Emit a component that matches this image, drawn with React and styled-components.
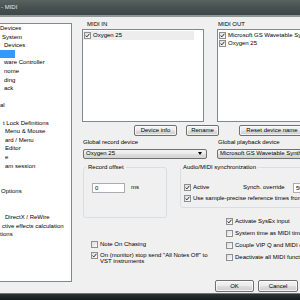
import React from "react";
import styled, { createGlobalStyle } from "styled-components";

const GlobalStyle = createGlobalStyle`
  html, body { margin: 0; padding: 0; background: #f0f0f0; }
  * { box-sizing: border-box; }
`;

const Window = styled.div`
  width: 300px;
  height: 300px;
  overflow: hidden;
  display: flex;
  flex-direction: column;
  background: #f0f0f0;
  font-family: "Liberation Sans", Arial, sans-serif;
  font-size: 6px;
  line-height: 7px;
  color: #000;
`;

const TitleBar = styled.div`
  flex: none;
  height: 17px;
  padding-left: 1px;
  background: linear-gradient(#58625f, #46504f 55%, #3d4746);
  border-bottom: 2px solid #8d9797;
  color: #e1e5e5;
  line-height: 15px;
  white-space: nowrap;
`;

const BottomBar = styled.div`
  flex: none;
  height: 7px;
  border-top: 1px solid #6f7879;
  background: linear-gradient(#2d3334, #161b1c);
`;

const Body = styled.div`
  flex: 1;
  min-height: 0;
  display: flex;
`;

const Tree = styled.ul`
  flex: none;
  width: 72px;
  margin: 6px 0 11px;
  padding: 0;
  list-style: none;
  background: #fff;
  border: 1px solid #828790;
  border-left: none;
  overflow: hidden;
`;

const TreeItem = styled.li`
  height: 8.6px;
  line-height: 8.6px;
  padding-left: ${p => p.$indent || 0}px;
  white-space: nowrap;
`;

const Selected = styled.span`
  display: inline-block;
  width: 15px;
  height: 8px;
  vertical-align: top;
  background: #3399ff;
`;

const Content = styled.div`
  flex: 1;
  min-width: 0;
  margin-left: 10px;
  padding-top: 4px;
  display: flex;
  flex-direction: column;
  white-space: nowrap;
`;

const Columns = styled.div`
  display: grid;
  grid-template-columns: 125px 130px;
  column-gap: 10px;
  margin-top: ${p => p.$top || 0}px;
`;

const Column = styled.div`
  display: flex;
  flex-direction: column;
`;

const Label = styled.div`
  height: 7px;
  padding-left: ${p => p.$indent || 0}px;
`;

const ListBox = styled.div`
  width: 122px;
  height: 93px;
  margin-top: 1px;
  padding: 1px 0 0;
  background: #fff;
  border: 1px solid #828790;
`;

const ListRow = styled.div`
  display: flex;
  align-items: center;
  gap: 2px;
  height: 8.6px;
  width: ${p => (p.$focus ? "111px" : "auto")};
  padding-left: 1px;
  background: ${p => (p.$focus ? "#ededed" : "transparent")};
`;

const Box = styled.span`
  flex: none;
  width: 7px;
  height: 7px;
  display: inline-flex;
  align-items: center;
  justify-content: center;
  border: 1px solid #8f8f8f;
  background: linear-gradient(135deg, #dcdcdc, #fbfbfb);
`;

const Check = ({ on }) => (
  <Box>
    {on && (
      <svg width="5" height="5" viewBox="0 0 5 5">
        <path d="M0.6 2.6 L1.9 3.9 L4.4 0.8" fill="none" stroke="#2e2e2e" strokeWidth="1" />
      </svg>
    )}
  </Box>
);

const ButtonRow = styled.div`
  display: flex;
  margin-top: 3px;
  padding-left: 52px;
  gap: 9px;
`;

const Button = styled.button`
  flex: none;
  width: ${p => p.$w}px;
  height: ${p => p.$h || 11}px;
  margin-left: ${p => p.$ml || 0}px;
  padding: 0;
  font: inherit;
  color: #000;
  border: 1px solid #707070;
  border-radius: 2px;
  background: linear-gradient(#f3f3f3, #ebebeb 48%, #dddddd 52%, #cfcfcf);
  box-shadow: inset 0 0 0 1px rgba(255, 255, 255, 0.7);
`;

const Combo = styled.div`
  display: flex;
  align-items: center;
  justify-content: space-between;
  width: ${p => p.$w}px;
  height: 9.5px;
  margin-top: 3px;
  margin-left: ${p => p.$ml || 0}px;
  padding: 0 4px 0 2px;
  border: 1px solid #707070;
  border-radius: 2px;
  background: linear-gradient(#f2f2f2, #ebebeb 48%, #dddddd 52%, #d4d4d4);
`;

const Arrow = styled.span`
  width: 0;
  height: 0;
  border-left: 2.5px solid transparent;
  border-right: 2.5px solid transparent;
  border-top: 3px solid #000;
`;

const Lower = styled.div`
  display: flex;
  margin-top: 5px;
  margin-left: 1px;
`;

const LeftCol = styled.div`
  flex: none;
  width: 97px;
  display: flex;
  flex-direction: column;
`;

const RightCol = styled.div`
  flex: none;
  width: 200px;
  display: flex;
  flex-direction: column;
`;

const Group = styled.fieldset`
  margin: 0;
  width: ${p => p.$w}px;
  height: ${p => p.$h}px;
  padding: 0 0 0 ${p => p.$pl || 0}px;
  border: 1px solid #d5dfe5;
  border-radius: 3px;
  legend {
    padding: 0 2px;
    height: 7px;
  }
`;

const OffsetRow = styled.div`
  display: flex;
  align-items: center;
  gap: 6px;
  margin-top: 12px;
  padding-left: 6px;
`;

const Field = styled.div`
  width: ${p => p.$w}px;
  height: 10px;
  padding-left: 2px;
  line-height: 8px;
  background: #fff;
  border: 1px solid #abadb3;
`;

const CheckRow = styled.div`
  display: flex;
  align-items: ${p => (p.$top ? "flex-start" : "center")};
  gap: 2px;
  width: ${p => (p.$w ? `${p.$w}px` : "auto")};
  white-space: ${p => (p.$wrap ? "normal" : "nowrap")};
  line-height: ${p => p.$lh || 7}px;
`;

const SyncRow = styled.div`
  display: flex;
  align-items: center;
  margin-top: ${p => p.$top || 0}px;
  padding-left: 3px;
`;

const Spread = styled.div`
  width: ${p => p.$w}px;
  flex: none;
`;

const CheckList = styled.div`
  display: flex;
  flex-direction: column;
  gap: ${p => p.$gap}px;
  margin-top: ${p => p.$top}px;
  padding-left: ${p => p.$pl}px;
`;

const Footer = styled.div`
  margin-top: auto;
  margin-bottom: 1px;
  display: flex;
  justify-content: flex-end;
  gap: 4px;
  padding-right: 2px;
`;

const treeItems = [
  ["Devices", 0], [" System", 2], ["Devices", 4], [null, 0],
  ["ware Controller", 4], ["nome", 4], ["ding", 4], ["ack", 4], ["", 0],
  ["al", 0], ["", 0], ["t Lock Definitions", 3], ["Menu & Mouse", 5],
  ["ard / Menu", 5], ["Editor", 5], ["e", 5], ["am session", 5], ["", 0],
  ["", 0], ["Options", 1], ["", 0], ["", 0], ["DirectX / ReWire", 5],
  ["ctive effects calculation", 2], ["tions", 0],
];

export default function App() {
  return (
    <Window>
      <GlobalStyle />
      <TitleBar>- MIDI</TitleBar>
      <Body>
        <Tree>
          {treeItems.map(([text, indent], i) => (
            <TreeItem key={i} $indent={indent}>
              {text === null ? <Selected /> : text}
            </TreeItem>
          ))}
        </Tree>
        <Content>
          <Columns>
            <Column>
              <Label $indent={5}>MIDI IN</Label>
              <ListBox>
                <ListRow $focus>
                  <Check on />
                  Oxygen 25
                </ListRow>
              </ListBox>
            </Column>
            <Column>
              <Label $indent={1}>MIDI OUT</Label>
              <ListBox>
                <ListRow>
                  <Check on />
                  Microsoft GS Wavetable Synth
                </ListRow>
                <ListRow>
                  <Check on />
                  Oxygen 25
                </ListRow>
              </ListBox>
            </Column>
          </Columns>
          <ButtonRow>
            <Button $w={43}>Device info</Button>
            <Button $w={33}>Rename</Button>
            <Button $w={66} $ml={11}>Reset device name</Button>
          </ButtonRow>
          <Columns $top={3}>
            <Column>
              <Label $indent={1}>Global record device</Label>
              <Combo $w={124} $ml={1}>
                Oxygen 25
                <Arrow />
              </Combo>
            </Column>
            <Column>
              <Label $indent={1}>Global playback device</Label>
              <Combo $w={124}>
                Microsoft GS Wavetable Synth
                <Arrow />
              </Combo>
            </Column>
          </Columns>
          <Lower>
            <LeftCol>
              <Group $w={84} $h={54} $pl={2}>
                <legend>Record offset</legend>
                <OffsetRow>
                  <Field $w={33}>0</Field>
                  ms
                </OffsetRow>
              </Group>
              <CheckList $gap={4} $top={23} $pl={8}>
                <CheckRow>
                  <Check />
                  Note On Chasing
                </CheckRow>
                <CheckRow $top $wrap $w={128} $lh={6.5}>
                  <Check on />
                  On (monitor) stop send "All Notes Off" to VST instruments
                </CheckRow>
              </CheckList>
            </LeftCol>
            <RightCol>
              <Group $w={160} $h={44} $pl={0}>
                <legend>Audio/MIDI synchronization</legend>
                <SyncRow $top={12}>
                  <Spread $w={59}>
                    <CheckRow>
                      <Check on />
                      Active
                    </CheckRow>
                  </Spread>
                  <Spread $w={50}>Synch. override</Spread>
                  <Field $w={30}>50</Field>
                </SyncRow>
                <SyncRow $top={2}>
                  <CheckRow>
                    <Check on />
                    Use sample-precise reference times from audio
                  </CheckRow>
                </SyncRow>
              </Group>
              <CheckList $gap={5.3} $top={10} $pl={46}>
                <CheckRow>
                  <Check on />
                  Activate SysEx input
                </CheckRow>
                <CheckRow>
                  <Check />
                  System time as MIDI time
                </CheckRow>
                <CheckRow>
                  <Check />
                  Couple VIP Q and MIDI editor
                </CheckRow>
                <CheckRow>
                  <Check />
                  Deactivate all MIDI functions
                </CheckRow>
              </CheckList>
            </RightCol>
          </Lower>
          <Footer>
            <Button $w={39} $h={12}>OK</Button>
            <Button $w={40} $h={12}>Cancel</Button>
          </Footer>
        </Content>
      </Body>
      <BottomBar />
    </Window>
  );
}
